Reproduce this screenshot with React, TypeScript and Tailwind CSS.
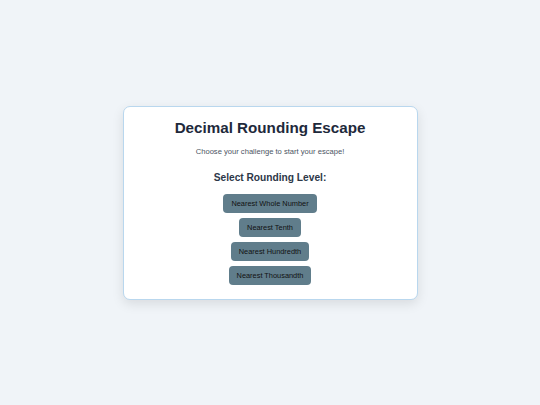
export default function App() {
  const levels = [
    "Nearest Whole Number",
    "Nearest Tenth",
    "Nearest Hundredth",
    "Nearest Thousandth",
  ];

  return (
    <div className="flex min-h-screen items-center justify-center bg-[#f0f4f8] [font-family:'Liberation_Sans',Arial,sans-serif]">
      <div className="flex w-[295px] flex-col items-center rounded-[7px] border border-[#b9d7ee] bg-white px-4 pt-[11px] pb-[14px] shadow-[0_4px_12px_rgba(0,0,0,0.1)]">
        <h1 className="text-[15.2px] leading-[20px] font-bold text-[#1e293b]">
          Decimal Rounding Escape
        </h1>
        <p className="mt-[8px] text-[7.6px] leading-[12px] text-[#4b5563]">
          Choose your challenge to start your escape!
        </p>
        <h2 className="mt-[13px] text-[10.2px] leading-[14px] font-bold text-[#2d3748]">
          Select Rounding Level:
        </h2>
        <div className="mt-[9px] flex flex-col items-center gap-[5px]">
          {levels.map((l) => (
            <button
              key={l}
              className="h-[19px] rounded-[4px] bg-[#607d8b] px-[8px] text-[7.4px] leading-[19px] text-[#111111]"
            >
              {l}
            </button>
          ))}
        </div>
      </div>
    </div>
  );
}
